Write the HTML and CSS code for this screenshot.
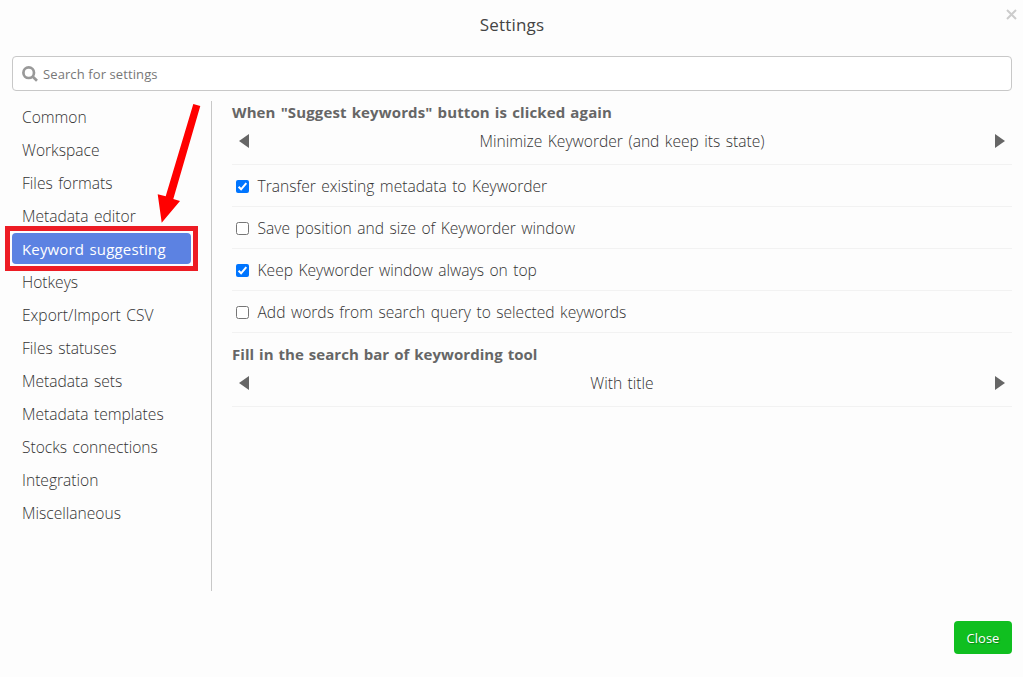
FILE: index.html
```html
<!DOCTYPE html>
<html lang="en">
<head>
<meta charset="utf-8">
<title>Settings</title>
<link rel="stylesheet" href="styles.css">
</head>
<body>
<div class="dialog">
  <header class="header">
    <h1 class="title">Settings</h1>
    <svg class="dismiss" viewBox="0 0 11 11"><path d="M1 1L10 10M10 1L1 10"/></svg>
  </header>
  <div class="search">
    <svg class="search-icon" viewBox="0 0 16 16"><circle cx="6.7" cy="6.7" r="5.3"/><path d="M10.6 10.6L15 14.8"/></svg>
    <span class="placeholder">Search for settings</span>
  </div>
  <main class="content">
    <nav class="nav">
      <a class="nav-item"><span>Common</span></a>
      <a class="nav-item"><span>Workspace</span></a>
      <a class="nav-item"><span>Files formats</span></a>
      <a class="nav-item"><span>Metadata editor</span></a>
      <a class="nav-item active"><span>Keyword suggesting</span></a>
      <a class="nav-item"><span>Hotkeys</span></a>
      <a class="nav-item"><span>Export/Import CSV</span></a>
      <a class="nav-item"><span>Files statuses</span></a>
      <a class="nav-item"><span>Metadata sets</span></a>
      <a class="nav-item"><span>Metadata templates</span></a>
      <a class="nav-item"><span>Stocks connections</span></a>
      <a class="nav-item"><span>Integration</span></a>
      <a class="nav-item"><span>Miscellaneous</span></a>
    </nav>
    <section class="panel">
      <div class="group">
        <h2 class="label label-first">When "Suggest keywords" button is clicked again</h2>
        <div class="picker">
          <svg class="arrow" viewBox="0 0 10 14"><path d="M10 0V14L0 7Z"/></svg>
          <span class="value">Minimize Keyworder (and keep its state)</span>
          <svg class="arrow" viewBox="0 0 10 14"><path d="M0 0V14L10 7Z"/></svg>
        </div>
      </div>
      <label class="option"><svg class="box checked" viewBox="0 0 13 13"><rect x="0" y="0" width="13" height="13" rx="2"/><path d="M2.6 6.8L5.1 9.3L10.3 3.2"/></svg><span>Transfer existing metadata to Keyworder</span></label>
      <label class="option"><svg class="box" viewBox="0 0 13 13"><rect x=".5" y=".5" width="12" height="12" rx="2"/></svg><span>Save position and size of Keyworder window</span></label>
      <label class="option"><svg class="box checked" viewBox="0 0 13 13"><rect x="0" y="0" width="13" height="13" rx="2"/><path d="M2.6 6.8L5.1 9.3L10.3 3.2"/></svg><span>Keep Keyworder window always on top</span></label>
      <label class="option"><svg class="box" viewBox="0 0 13 13"><rect x=".5" y=".5" width="12" height="12" rx="2"/></svg><span>Add words from search query to selected keywords</span></label>
      <div class="group">
        <h2 class="label">Fill in the search bar of keywording tool</h2>
        <div class="picker">
          <svg class="arrow" viewBox="0 0 10 14"><path d="M10 0V14L0 7Z"/></svg>
          <span class="value">With title</span>
          <svg class="arrow" viewBox="0 0 10 14"><path d="M0 0V14L10 7Z"/></svg>
        </div>
      </div>
    </section>
  </main>
  <footer class="footer"><button class="close">Close</button></footer>
  <div class="highlight"></div>
  <svg class="pointer" viewBox="0 0 46 122"><path d="M37.3 3L44.3 5L17.3 98L24 100L5.7 121.7L1.7 93.3L9.7 95.3Z"/></svg>
</div>
</body>
</html>
```
FILE: styles.css
```css
* { box-sizing: border-box; }
body {
  margin: 0;
  background: #fdfdfd;
  color: #333;
  font: 300 15.6px/20px "Open Sans", "Noto Sans", sans-serif;
}
.dialog {
  position: relative;
  display: flex;
  flex-direction: column;
  height: 677px;
  padding: 0 11px 23px 12px;
  overflow: hidden;
}
.header { height: 56px; padding-top: 14px; }
.title { margin: 0; text-align: center; font-size: 17px; line-height: 22px; font-weight: 500; letter-spacing: .2px; color: #444; }
.dismiss { position: absolute; top: 9px; right: 6px; width: 11px; height: 11px; fill: none; stroke: #ccc; stroke-width: 2; }
.search {
  display: flex;
  align-items: center;
  gap: 5px;
  height: 35px;
  padding-left: 9px;
  border: 1px solid #c8c8c8;
  border-radius: 4px;
  background: #fff;
}
.search-icon { width: 16px; height: 16px; fill: none; stroke: #999; stroke-width: 2.7; }
.placeholder { font-size: 13px; font-weight: 400; color: #777; letter-spacing: .1px; }
.content { display: flex; height: 490px; margin-top: 10px; }
.nav {
  display: flex;
  flex-direction: column;
  gap: 2px;
  width: 200px;
  padding-right: 20px;
  border-right: 1px solid #c8c8c8;
}
.nav-item { flex: none; height: 31px; padding: 1px 0 0 10px; border-radius: 4px; line-height: 31px; white-space: nowrap; word-spacing: 1.4px; }
.active { background: #5c82e2; color: #fff; font-size: 15px; font-weight: 400; letter-spacing: .15px; }
.panel { flex: 1; padding-left: 20px; }
.group { border-bottom: 1px solid #f2f2f2; }
.label { margin: 0; height: 42px; padding-top: 11px; font-size: 15px; line-height: 20px; font-weight: 700; color: #666; word-spacing: 1px; letter-spacing: .04px; }
.label-first { height: 32px; padding-top: 1px; letter-spacing: .13px; }
.group .picker { margin-top: -1px; }
.picker { display: flex; align-items: center; justify-content: space-between; height: 32px; padding: 0 7px 14px; }
.value { word-spacing: 1.4px; }
.arrow { width: 10px; height: 14px; fill: #666; }
.option { display: flex; align-items: center; gap: 8.5px; height: 42px; padding: 1px 0 0 4px; border-bottom: 1px solid #f2f2f2; word-spacing: 1.4px; }
.box { width: 13px; height: 13px; fill: #fff; stroke: #767676; }
.checked rect { fill: #0075ff; stroke: none; }
.checked path { fill: none; stroke: #fff; stroke-width: 2; }
.footer { display: flex; justify-content: flex-end; margin-top: auto; }
.close {
  width: 58px;
  height: 33px;
  padding: 1px 0 0;
  border: 0;
  border-radius: 4px;
  background: #10bf20;
  color: #fff;
  font: 500 13px/32px "Open Sans", sans-serif;
  text-shadow: 1px 1px 1px rgba(0, 0, 0, .3);
}
.highlight { position: absolute; left: 5px; top: 226px; width: 193px; height: 45px; border: 5px solid #ed1c24; }
.pointer { position: absolute; left: 156px; top: 101px; width: 46px; height: 122px; fill: #f00; }
```
